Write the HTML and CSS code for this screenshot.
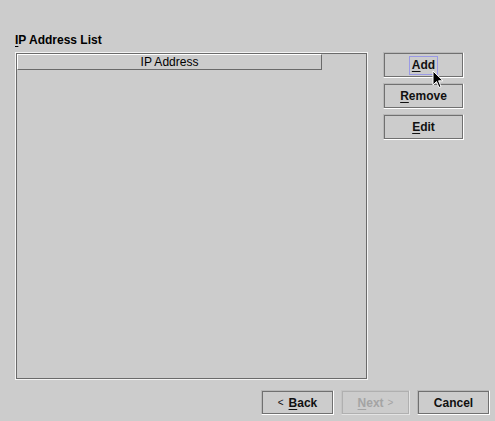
FILE: index.html
```html
<!DOCTYPE html>
<html lang="en">
<head>
    <meta charset="UTF-8">
    <title>IP Address List</title>
    <link rel="stylesheet" href="styles.css">
</head>
<body>
    <div class="dialog">
        <div class="main">
            <div class="list-panel">
                <div class="panel-title"><u>I</u>P Address List</div>
                <div class="list">
                    <div class="list-header">IP Address</div>
                </div>
            </div>
            <div class="side-buttons">
                <button class="btn"><span class="focus"><u>A</u>dd</span></button>
                <button class="btn"><u>R</u>emove</button>
                <button class="btn"><u>E</u>dit</button>
            </div>
        </div>
        <div class="footer">
            <button class="btn wide"><span class="arrow">&lt;</span><u>B</u>ack</button>
            <button class="btn next" disabled><u>N</u>ext<span class="arrow">&gt;</span></button>
            <button class="btn wide">Cancel</button>
        </div>
    </div>

    <svg class="cursor" width="12" height="19" viewBox="0 0 12 19">
        <path d="M1 1 L1 15 L4.5 11.5 L7 17.5 L9 16.6 L6.6 10.8 L11 10.8 Z" fill="#000" stroke="#fff" stroke-width="1"/>
    </svg>
</body>
</html>
```

FILE: styles.css
```css
* {
    box-sizing: border-box;
    margin: 0;
    padding: 0;
}
body {
    background: #cccccc;
    font-family: "Liberation Sans", Arial, sans-serif;
    font-size: 12px;
    color: #000;
    width: 495px;
    height: 421px;
    overflow: hidden;
}
u {
    text-underline-offset: 2px;
}
.dialog {
    padding-top: 33px;
}
.main {
    display: flex;
    gap: 15px;
    padding-left: 15px;
}
.panel-title {
    font-weight: bold;
    height: 14px;
    line-height: 14px;
    margin-bottom: 5px;
}
.list {
    width: 353px;
    height: 328px;
    border: 1px solid #f4f4f4;
    box-shadow: inset 0 0 0 1px #6a6a6a;
    padding: 1px;
}
.list-header {
    width: 305px;
    height: 16px;
    line-height: 14px;
    text-align: center;
    border: 1px solid;
    border-color: #fff #6a6a6a #6a6a6a #fff;
    background: #cccccc;
}
.side-buttons {
    display: flex;
    flex-direction: column;
    gap: 5px;
    padding-top: 19px;
}
.btn {
    width: 81px;
    height: 26px;
    background: #cccccc;
    font-family: "Liberation Sans", Arial, sans-serif;
    font-size: 12px;
    font-weight: bold;
    color: #111;
    border: 1px solid;
    border-color: #b8b8b8 #fff #fff #b8b8b8;
    box-shadow: inset 0 0 0 1px #707070;
    display: flex;
    align-items: center;
    justify-content: center;
}
.focus {
    border: 1px solid #9a9ae6;
    padding: 1px 2px 2px;
    line-height: 14px;
}
.footer {
    display: flex;
    justify-content: flex-end;
    gap: 7px;
    padding-right: 5px;
    margin-top: 10px;
}
.footer .btn {
    height: 25px;
}
.btn.wide {
    width: 73px;
}
.btn.next {
    width: 69px;
    color: #a4a4a4;
    box-shadow: inset 0 0 0 1px #b0b0b0;
    border-color: #c4c4c4 #e4e4e4 #e4e4e4 #c4c4c4;
}
.arrow {
    font-weight: normal;
    font-size: 10px;
    margin-right: 5px;
}
.next .arrow {
    margin-right: 0;
    margin-left: 4px;
}
.cursor {
    position: absolute;
    left: 432px;
    top: 70px;
}
```
